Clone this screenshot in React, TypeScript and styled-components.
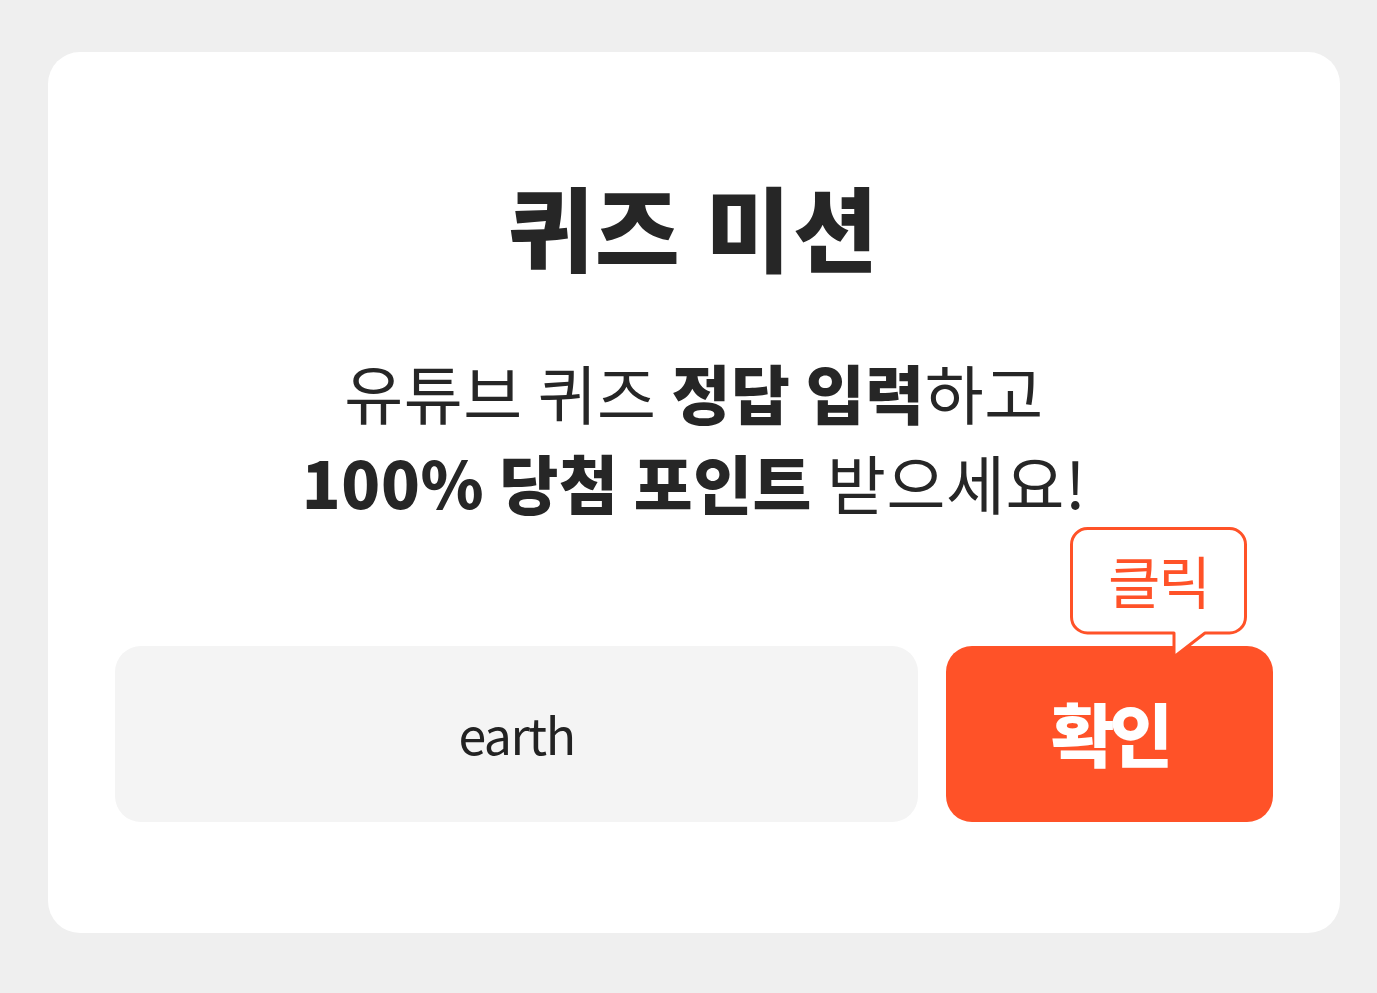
import React from 'react';
import styled, { createGlobalStyle } from 'styled-components';

const GlobalStyle = createGlobalStyle`
  html, body {
    margin: 0;
    padding: 0;
    background: #efefef;
  }
  body {
    font-family: "Noto Sans CJK KR", "Noto Sans", sans-serif;
    color: #222;
  }
`;

const ORANGE = '#ff5228';

const Page = styled.div`
  width: 1377px;
  height: 993px;
  box-sizing: border-box;
  padding: 52px 37px 0 48px;
`;

const Card = styled.div`
  background: #fff;
  border-radius: 32px;
  height: 881px;
  box-sizing: border-box;
  padding: 118px 67px 0;
  display: flex;
  flex-direction: column;
  align-items: center;
`;

const Title = styled.h1`
  margin: 0;
  font-size: 92px;
  line-height: 110px;
  font-weight: 900;
  letter-spacing: 2.5px;
  color: #262626;
`;

const Desc = styled.p`
  margin: 66px 0 0;
  font-size: 64px;
  line-height: 90px;
  font-weight: 400;
  letter-spacing: 0.6px;
  text-align: center;
  color: #262626;
`;

const Strong = styled.b`
  font-weight: 900;
`;

const Row = styled.div`
  margin-top: 120px;
  width: 100%;
  display: flex;
  gap: 28px;
`;

const AnswerInput = styled.input`
  flex: 1;
  height: 176px;
  box-sizing: border-box;
  border: none;
  outline: none;
  border-radius: 26px;
  background: #f4f4f4;
  text-align: center;
  font-family: "Noto Sans CJK KR", "Noto Sans", sans-serif;
  font-size: 50px;
  letter-spacing: -1.5px;
  color: #222;
  padding: 0 0 2px;
`;

const ButtonWrap = styled.div`
  position: relative;
  width: 327px;
`;

const ConfirmButton = styled.button`
  width: 100%;
  height: 176px;
  border: none;
  border-radius: 26px;
  background: ${ORANGE};
  color: #fff;
  font-family: "Noto Sans CJK KR", sans-serif;
  font-size: 69px;
  font-weight: 900;
  letter-spacing: -5px;
  padding: 0 0 4px;
`;

const Bubble = styled.div`
  position: absolute;
  left: 124px;
  top: -119px;
  width: 177px;
  height: 132px;
`;

const BubbleShape = styled.svg`
  position: absolute;
  inset: 0;
`;

const BubbleText = styled.span`
  position: relative;
  display: flex;
  align-items: center;
  justify-content: center;
  height: 104px;
  font-size: 57px;
  font-weight: 400;
  letter-spacing: -2px;
  color: ${ORANGE};
`;

const ClickBubble = () => (
  <Bubble>
    <BubbleShape width="177" height="132" viewBox="0 0 177 132">
      <path
        d="M17.5 1.5 H159.5 A16 16 0 0 1 175.5 17.5 V90 A16 16 0 0 1 159.5 106 H135 L104 130 V106 H17.5 A16 16 0 0 1 1.5 90 V17.5 A16 16 0 0 1 17.5 1.5 Z"
        fill="#fff"
        stroke={ORANGE}
        strokeWidth="3"
        strokeLinejoin="round"
      />
    </BubbleShape>
    <BubbleText>클릭</BubbleText>
  </Bubble>
);

const App = () => (
  <>
    <GlobalStyle />
    <Page>
      <Card>
        <Title>퀴즈 미션</Title>
        <Desc>
          유튜브 퀴즈 <Strong>정답 입력</Strong>하고
          <br />
          <Strong>100% 당첨 포인트</Strong> 받으세요!
        </Desc>
        <Row>
          <AnswerInput defaultValue="earth" />
          <ButtonWrap>
            <ConfirmButton>확인</ConfirmButton>
            <ClickBubble />
          </ButtonWrap>
        </Row>
      </Card>
    </Page>
  </>
);

export default App;
